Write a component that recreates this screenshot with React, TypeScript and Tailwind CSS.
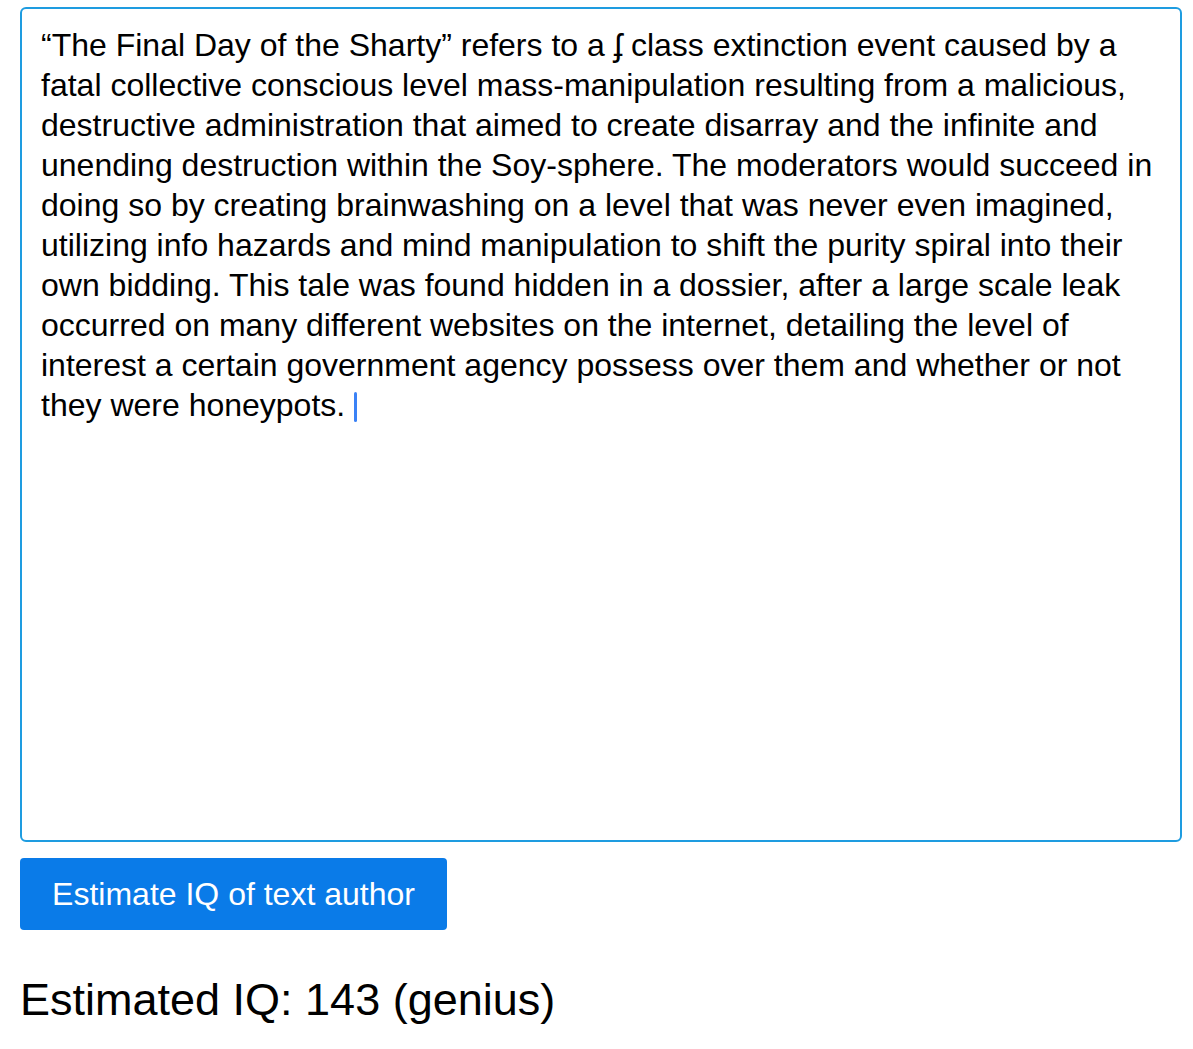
import React from "react";

const lines = [
  "\u201CThe Final Day of the Sharty\u201D refers to a \u0284 class extinction event caused by a",
  "fatal collective conscious level mass-manipulation resulting from a malicious,",
  "destructive administration that aimed to create disarray and the infinite and",
  "unending destruction within the Soy-sphere. The moderators would succeed in",
  "doing so by creating brainwashing on a level that was never even imagined,",
  "utilizing info hazards and mind manipulation to shift the purity spiral into their",
  "own bidding. This tale was found hidden in a dossier, after a large scale leak",
  "occurred on many different websites on the internet, detailing the level of",
  "interest a certain government agency possess over them and whether or not",
  "they were honeypots.",
];

export default function App() {
  return (
    <div
      className="bg-white min-h-[1049px] px-5 pt-[7px] text-black"
      style={{ fontFamily: '"Liberation Sans", Arial, sans-serif' }}
    >
      <div className="h-[835px] w-[1162px] rounded-md border-2 border-[#1e9ce0] px-[19px] pt-[16px]">
        <div className="text-[32px] leading-[40px]">
          {lines.map((l, i) => (
            <div key={i} className="whitespace-nowrap">
              {l}
              {i === lines.length - 1 && (
                <span className="ml-[9px] inline-block h-[30px] w-[3px] translate-y-[6px] rounded-sm bg-[#3b82f6] align-baseline" />
              )}
            </div>
          ))}
        </div>
      </div>
      <button className="mt-4 flex h-[72px] w-[427px] items-center justify-center rounded bg-[#0a7be8] text-[32px] text-white">
        Estimate IQ of text author
      </button>
      <div className="mt-[46px] text-[45px] leading-[48px]">Estimated IQ: 143 (genius)</div>
    </div>
  );
}
